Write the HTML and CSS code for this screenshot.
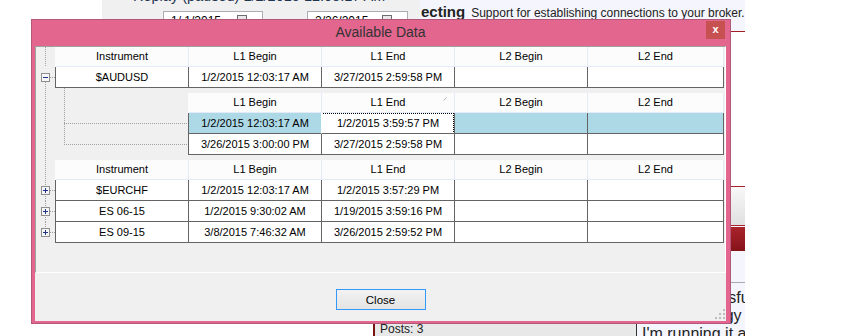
FILE: index.html
```html
<!DOCTYPE html>
<html>
<head>
<meta charset="utf-8">
<title>Available Data</title>
<link rel="stylesheet" href="styles.css">
</head>
<body>
<div class="page">
    <div class="replayBox">
        <div class="replayTitle">Replay (paused) 1/2/2015 12:03:17 AM</div>
        <div class="replayDates">
            <div class="datePick">1/ 1/2015<span class="calBtn"></span></div>
            <div class="datePick wide">2/26/2015<span class="calBtn"></span></div>
        </div>
    </div>
    <div class="topicHead"><b>ecting</b>Support for establishing connections to your broker.</div>
    <div class="sideNav">
        <div class="navBtn"></div>
        <div class="navBar"></div>
    </div>
    <div class="postInfo">Posts: 3</div>
    <div class="postBody">
        <p>Very successful</p>
        <p>using strategy</p>
        <p>I'm running it again</p>
    </div>

    <div class="dialog">
        <div class="dlgTitle">
            <span class="dlgCaption">Available Data</span>
            <span class="dlgClose">x</span>
        </div>
        <div class="dlgClient">
            <div class="gridPanel">
                <div class="gRow">
                    <div class="exp line"></div>
                    <div class="cells head">
                        <span>Instrument</span><span>L1 Begin</span><span>L1 End</span><span>L2 Begin</span><span>L2 End</span>
                    </div>
                </div>
                <div class="gRow">
                    <div class="exp open">
                        <svg width="9" height="9"><rect x="0.5" y="0.5" width="8" height="8" fill="#f6f6f6" stroke="#8e8e8e"/><path d="M2 4.5h5" stroke="#22348a"/></svg>
                    </div>
                    <div class="cells data">
                        <span>$AUDUSD</span><span>1/2/2015 12:03:17 AM</span><span>3/27/2015 2:59:58 PM</span><span></span><span></span>
                    </div>
                </div>
                <div class="detail">
                    <div class="exp line"></div>
                    <div class="indent"></div>
                    <div class="subGrid">
                        <div class="cells head sub">
                            <span>L1 Begin</span><span class="sorted">L1 End<svg width="4" height="4"><path d="M0.5 3.5l3-3" stroke="#b4b4b4"/></svg></span><span>L2 Begin</span><span>L2 End</span>
                        </div>
                        <div class="cells data sub selected">
                            <span>1/2/2015 12:03:17 AM</span><span class="focus">1/2/2015 3:59:57 PM</span><span></span><span></span>
                        </div>
                        <div class="cells data sub">
                            <span>3/26/2015 3:00:00 PM</span><span>3/27/2015 2:59:58 PM</span><span></span><span></span>
                        </div>
                    </div>
                </div>
                <div class="gRow">
                    <div class="exp line"></div>
                    <div class="cells head">
                        <span>Instrument</span><span>L1 Begin</span><span>L1 End</span><span>L2 Begin</span><span>L2 End</span>
                    </div>
                </div>
                <div class="gRow">
                    <div class="exp closed">
                        <svg width="9" height="9"><rect x="0.5" y="0.5" width="8" height="8" fill="#f6f6f6" stroke="#8e8e8e"/><path d="M2 4.5h5M4.5 2v5" stroke="#22348a"/></svg>
                    </div>
                    <div class="cells data">
                        <span>$EURCHF</span><span>1/2/2015 12:03:17 AM</span><span>1/2/2015 3:57:29 PM</span><span></span><span></span>
                    </div>
                </div>
                <div class="gRow">
                    <div class="exp closed">
                        <svg width="9" height="9"><rect x="0.5" y="0.5" width="8" height="8" fill="#f6f6f6" stroke="#8e8e8e"/><path d="M2 4.5h5M4.5 2v5" stroke="#22348a"/></svg>
                    </div>
                    <div class="cells data">
                        <span>ES 06-15</span><span>1/2/2015 9:30:02 AM</span><span>1/19/2015 3:59:16 PM</span><span></span><span></span>
                    </div>
                </div>
                <div class="gRow">
                    <div class="exp closed last">
                        <svg width="9" height="9"><rect x="0.5" y="0.5" width="8" height="8" fill="#f6f6f6" stroke="#8e8e8e"/><path d="M2 4.5h5M4.5 2v5" stroke="#22348a"/></svg>
                    </div>
                    <div class="cells data">
                        <span>ES 09-15</span><span>3/8/2015 7:46:32 AM</span><span>3/26/2015 2:59:52 PM</span><span></span><span></span>
                    </div>
                </div>
            </div>
            <div class="dlgFoot">
                <button class="btnClose" type="button">Close</button>
                <svg class="grip" width="10" height="10">
                    <rect x="8" y="0" width="2" height="2" fill="#bdbdbd"/>
                    <rect x="4" y="4" width="2" height="2" fill="#bdbdbd"/>
                    <rect x="8" y="4" width="2" height="2" fill="#bdbdbd"/>
                    <rect x="0" y="8" width="2" height="2" fill="#bdbdbd"/>
                    <rect x="4" y="8" width="2" height="2" fill="#bdbdbd"/>
                    <rect x="8" y="8" width="2" height="2" fill="#bdbdbd"/>
                </svg>
            </div>
        </div>
    </div>
</div>
</body>
</html>
```

FILE: styles.css
```css
body {
    margin: 0;
    font-family: "Liberation Sans", Arial, sans-serif;
    background-color: white;
}
.page {
    position: relative;
    width: 852px;
    height: 336px;
    overflow: hidden;
    display: grid;
    grid-template-columns: 102px 271px 47px 216px 109px 1fr;
    grid-template-rows: 32px 154px 96px 41px 13px;
}

/* page behind the window */
.replayBox {
    grid-column: 2 / 4;
    grid-row: 1 / 3;
    background-color: #f0f0f0;
}
.replayTitle {
    margin-top: -12px;
    padding-left: 31px;
    font-size: 14.5px;
    line-height: 17px;
    color: #1f3550;
    white-space: nowrap;
}
.replayDates {
    display: flex;
    gap: 44px;
    margin-top: 6px;
    padding-left: 61px;
}
.datePick {
    display: flex;
    justify-content: space-between;
    box-sizing: border-box;
    width: 100px;
    height: 20px;
    padding: 0 15px 0 7px;
    border: 1px solid #abadb3;
    background-color: white;
    font-size: 12px;
    line-height: 18px;
}
.datePick.wide {
    width: 101px;
}
.calBtn {
    width: 8px;
    height: 8px;
    margin-top: 3px;
    border: 1px solid #6d6d6d;
    background-color: #e8e8e8;
}
.topicHead {
    grid-column: 4 / 6;
    grid-row: 1;
    padding: 3px 0 0 1px;
    border-bottom: 1px solid #a31d24;
    background-color: #f5f5fd;
    font-size: 12px;
    line-height: 17px;
    color: #222;
    white-space: nowrap;
    overflow: hidden;
}
.topicHead b {
    font-size: 15px;
    margin-right: 6px;
}
.sideNav {
    grid-column: 4 / 6;
    grid-row: 3;
    border-top: 1px solid #a8232c;
    background-color: #f5f5fd;
}
.navBtn {
    height: 38px;
    border-bottom: 1px solid #a8232c;
    background: linear-gradient(#f8f8f8, #e0e0e0);
}
.navBar {
    height: 24px;
    margin-top: 1px;
    background: linear-gradient(#ab232b, #85131a);
}
.postInfo {
    grid-column: 3 / 5;
    grid-row: 5;
    padding-left: 5px;
    border-left: 2px solid #7a1414;
    background-color: #e8e8e8;
    font-size: 12px;
    line-height: 12px;
    color: #222;
}
.postBody {
    grid-column: 5;
    grid-row: 4 / 6;
    padding: 6px 0 0 5px;
    border-top: 1px solid #a9a9a9;
    border-left: 1px solid #333;
    background-color: #f5f5fd;
    font-size: 16px;
    line-height: 18px;
    color: #222;
    white-space: nowrap;
    overflow: hidden;
}
.postBody p {
    margin: 0;
}

/* the window */
.dialog {
    position: absolute;
    left: 31px;
    top: 19px;
    box-sizing: border-box;
    width: 700px;
    height: 305px;
    padding: 0 4px 4px 3px;
    border: 1px solid #b5577b;
    background-color: #e3668f;
}
.dlgTitle {
    display: grid;
    grid-template-columns: 20px 1fr 20px;
    height: 24px;
}
.dlgCaption {
    grid-column: 2;
    text-align: center;
    font-size: 14px;
    line-height: 24px;
    color: #333;
}
.dlgClose {
    width: 19px;
    height: 18px;
    margin-top: 1px;
    background-color: #c75050;
    color: white;
    font-weight: bold;
    font-size: 11px;
    line-height: 16px;
    text-align: center;
}
.dlgClient {
    height: 275px;
    background-color: #f0f0f0;
    font-size: 11px;
    color: #000;
}
.gridPanel {
    box-sizing: border-box;
    height: 227px;
    margin-top: 2px;
    border: 1px solid;
    border-color: #a0a0a0 white white #a0a0a0;
}
.gRow, .detail {
    display: flex;
}
.exp {
    flex: none;
    box-sizing: border-box;
    width: 19px;
}
.exp svg {
    display: block;
}
.exp.line {
    background: repeating-linear-gradient(#a0a0a0 0 1px, transparent 1px 2px) 9px 0 / 1px 100% no-repeat;
}
.exp.open, .exp.closed {
    padding: 6px 0 0 5px;
}
.exp.open {
    background:
        repeating-linear-gradient(#a0a0a0 0 1px, transparent 1px 2px) 9px 15px / 1px 6px no-repeat,
        repeating-linear-gradient(to right, #a0a0a0 0 1px, transparent 1px 2px) 14px 10px / 5px 1px no-repeat;
}
.exp.closed {
    background:
        repeating-linear-gradient(#a0a0a0 0 1px, transparent 1px 2px) 9px 0 / 1px 100% no-repeat,
        repeating-linear-gradient(to right, #a0a0a0 0 1px, transparent 1px 2px) 14px 10px / 5px 1px no-repeat;
}
.exp.closed.last {
    background-size: 1px 6px, 5px 1px;
}
.cells {
    display: grid;
    grid-template-columns: repeat(4, 133px) 136px;
}
.cells.sub {
    grid-template-columns: repeat(3, 133px) 136px;
}
.cells span {
    box-sizing: border-box;
    border-right: 1px solid;
    text-align: center;
    white-space: nowrap;
    overflow: hidden;
}
.head {
    border-left: 1px solid #fcfcfc;
    background-color: #fcfcfc;
}
.head span {
    height: 20px;
    line-height: 19px;
    border-right-color: #e2ebf7;
    border-bottom: 1px solid #e2ebf7;
}
.data {
    border-left: 1px solid #646464;
    background-color: white;
}
.data span {
    height: 21px;
    line-height: 20px;
    border-right-color: #646464;
    border-bottom: 1px solid #646464;
}
.detail {
    height: 72px;
}
.indent {
    flex: none;
    width: 133px;
    background:
        repeating-linear-gradient(#a0a0a0 0 1px, transparent 1px 2px) 9px 0 / 1px 57px no-repeat,
        repeating-linear-gradient(to right, #a0a0a0 0 1px, transparent 1px 2px) 9px 35px / 124px 1px no-repeat,
        repeating-linear-gradient(to right, #a0a0a0 0 1px, transparent 1px 2px) 9px 56px / 124px 1px no-repeat;
}
.subGrid {
    padding-top: 5px;
}
.sorted {
    position: relative;
}
.sorted svg {
    position: absolute;
    right: 7px;
    top: 4px;
}
.selected span {
    background-color: #add8e6;
}
.selected span:first-child {
    border-right-color: white;
}
.selected .focus {
    position: relative;
    background-color: white;
}
.focus::after {
    content: "";
    position: absolute;
    left: -1px;
    top: 0;
    right: 0;
    bottom: -1px;
    border: 1px dotted #000;
}
.dlgFoot {
    display: grid;
    grid-template-columns: 1fr auto 1fr;
    height: 46px;
}
.btnClose {
    grid-column: 2;
    align-self: start;
    width: 90px;
    height: 21px;
    margin-top: 16px;
    padding: 0;
    border: 1px solid #3399ff;
    background: linear-gradient(#f2f2f2, #e4e4e4);
    font-family: inherit;
    font-size: 11.5px;
    color: #000;
}
.grip {
    grid-column: 3;
    justify-self: end;
    align-self: end;
    margin: 0 1px 0 0;
}
```
